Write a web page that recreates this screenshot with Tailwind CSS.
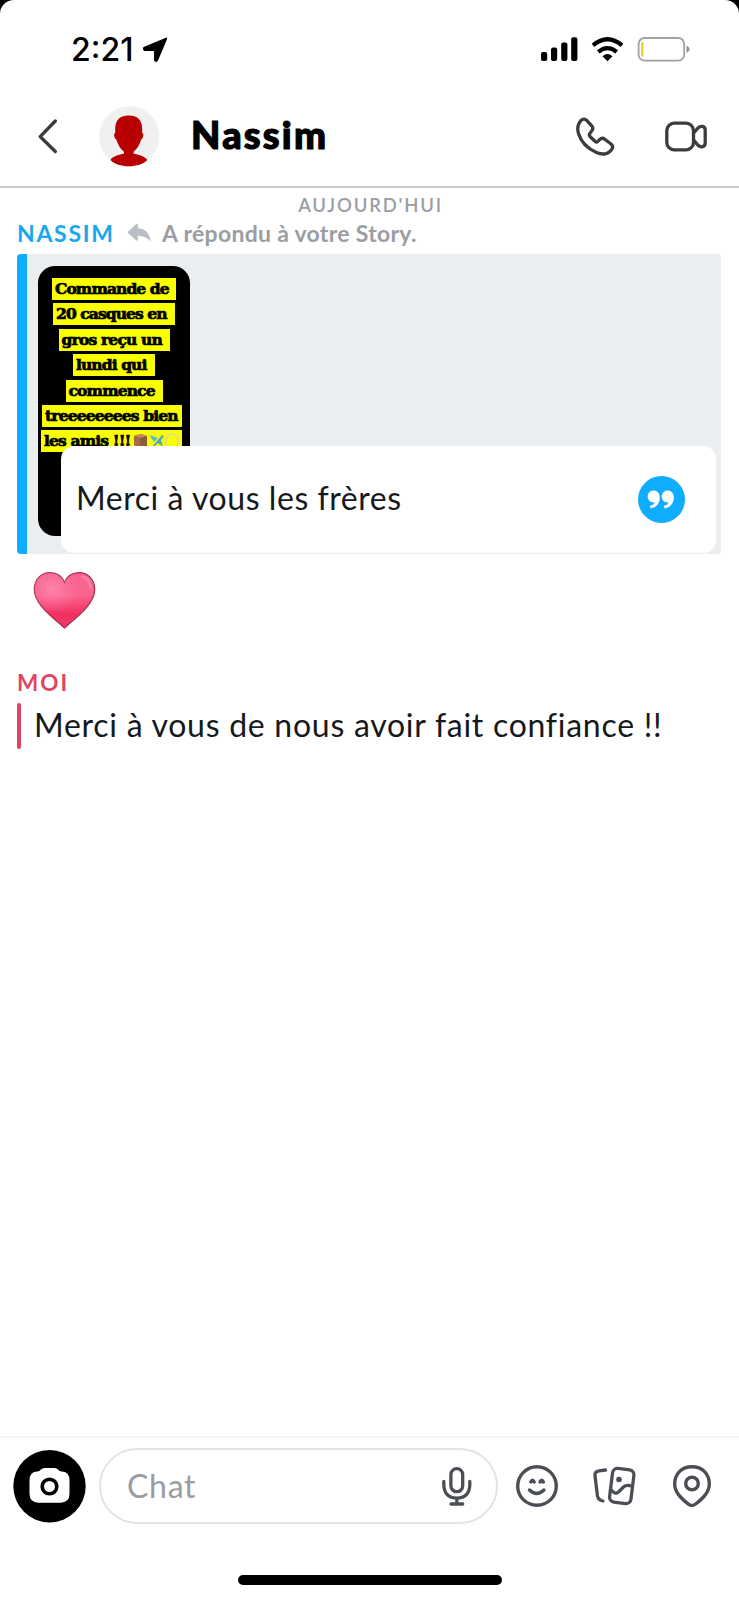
<!DOCTYPE html>
<html lang="fr">
<head>
<meta charset="utf-8">
<title>Chat</title>
<script src="https://cdn.jsdelivr.net/npm/@tailwindcss/browser@4"></script>
</head>
<body class="bg-black">
<div class="w-[739px] h-[1600px] bg-white rounded-t-[14px] overflow-hidden flex flex-col font-['Lato','Noto_Sans',sans-serif]">

  <!-- Status bar -->
  <div class="h-[98px] shrink-0 flex items-start pt-[37px] pl-[71px] pr-[48px]">
    <span class="font-['Inter',sans-serif] font-medium text-[32px] leading-[25px] w-[72px] tracking-[0px] text-black">2:21</span>
    <svg class="w-[25px] h-[25px]" viewBox="0 0 25 25"><path d="M23.2 1.600 14.200 22.800Q13 25 12 22.800V13H1.900Q-.4 12 1.600 10.700Z" fill="#000" stroke="#000" stroke-width="2" stroke-linejoin="round"/></svg>
    <svg class="ml-auto w-[38px] h-[25px]" viewBox="0 0 38 25"><rect x="1" y="15" width="6.200" height="9" rx="2"/><rect x="11" y="10.500" width="6.200" height="13.500" rx="2"/><rect x="21.200" y="5.500" width="6.200" height="18.500" rx="2"/><rect x="31.200" y="0.300" width="6.200" height="23.700" rx="2"/></svg>
    <svg class="ml-[13px] w-[33px] h-[25px]" viewBox="0 0 33 25" fill="none" stroke="#000" stroke-width="4.200"><path d="M2 8.300Q16.500 -3.900 31 8.300"/><path d="M7.300 14.800Q16.500 7.300 25.700 14.800"/><path d="M11.500 19.200Q16.500 14.800 21.500 19.200L16.500 24.200Z" fill="#000" stroke="none"/></svg>
    <svg class="ml-[13px] w-[54px] h-[25px]" viewBox="0 0 54 25"><rect x="1.600" y="1" width="45.600" height="22.700" rx="6" fill="none" stroke="#a2a2a2" stroke-width="1.800"/><rect x="4" y="5" width="2.600" height="14.500" rx="1" fill="#f2d32c"/><path d="M49.500 8.500Q52.500 10 52.500 12.300T49.500 16Z" fill="#8f8f8f"/></svg>
  </div>

  <!-- Conversation header -->
  <header class="h-[90px] shrink-0 border-b-2 border-[#c9c9c9] flex items-start">
    <svg class="ml-[36px] mt-[19px] w-[24px] h-[38px]" viewBox="0 0 24 38" fill="none" stroke="#3c3c3e" stroke-width="3.400" stroke-linecap="round" stroke-linejoin="round"><path d="M19.300 4 4.200 19.600 19.300 34.500"/></svg>
    <svg class="ml-[39px] mt-[8px] w-[61px] h-[61px]" viewBox="0 0 61 61"><circle cx="30.300" cy="30.500" r="30.200" fill="#f0f0f0"/><path d="M16.300 27C15.200 14 20.500 9.500 29.700 9.500S44.200 14 43.100 27C45.300 27 44.200 33 42.300 33.200 40.500 39 38 43 34.500 45.700V47.500C39 48.500 46 50 48.200 54 41 62.300 18.500 62.300 11.500 54 13.500 50 20.500 48.500 25 47.500V45.700C21.500 43 19 39 17.200 33.200 15.200 33 14.200 27 16.300 27Z" fill="#b90000"/></svg>
    <h1 class="ml-[31px] mt-[13px] font-black text-[38px] leading-[46px] text-black tracking-[2.200px] [-webkit-text-stroke:1.2px_#000]">Nassim</h1>
    <svg class="ml-auto mt-[18px] w-[42px] h-[42px]" viewBox="0 0 42 42" fill="none" stroke="#3c3c3e" stroke-width="3.300" stroke-linejoin="round" stroke-linecap="round"><path d="M6.300 4.200C8 2.500 10.200 2.900 11.700 4.400L16.700 9.800C18.200 11.600 18 13.400 16.700 14.900L14.800 17.500C14 18.500 14.200 19.500 15 20.500L20 25.300C21 26.200 21.900 26.200 22.800 25.400L24.900 23.300C26.300 22 28.100 21.800 29.800 23.200L36 28C38 29.800 38.200 31.700 36.500 33.700C33 38.200 27.500 39 21.500 36.500C12.500 32.500 6 26 3.500 17.500C2 12.500 3.100 7.500 6.300 4.200Z"/></svg>
    <svg class="ml-[47px] mr-[30px] mt-[21px] w-[45px] h-[36px]" viewBox="0 0 45 36" fill="none" stroke="#3c3c3e" stroke-width="3.300" stroke-linejoin="round"><rect x="2.800" y="4.200" width="26.700" height="26.700" rx="7.500"/><path d="M29.700 14 34 9C37 6 41.200 7.200 41.200 11V24C41.200 28 37 29 34 26.300L29.700 21"/></svg>
  </header>

  <!-- Messages -->
  <main class="flex-1 pl-[17px] pr-[18px]">
    <div class="mt-[7px] h-[20px] text-center text-[18.500px] leading-[20px] font-semibold tracking-[1.800px] text-[#9a9ea3] pl-[3px]">AUJOURD'HUI</div>
    <div class="mt-[4px] h-[35px] flex items-start">
      <span class="w-[110px] pt-[1px] text-[23px] leading-[26px] font-bold tracking-[1.700px] text-[#18a8f0]">NASSIM</span>
      <svg class="mt-[4px] w-[25px] h-[20px]" viewBox="0 0 25 20"><path d="M10.800 1.500V5.200C18.500 5.600 23 10.500 23.500 18.500 20.500 14.700 16.500 12.800 10.800 12.700V17Q10.500 18.500 9 17.300L1.200 10.300Q.4 9.300 1.200 8.500L9 1.200Q10.500 0 10.800 1.500Z" fill="#b9bec5"/></svg>
      <span class="ml-[10px] pt-[1px] text-[23px] leading-[26px] font-bold tracking-[0.300px] text-[#9a9ea3] whitespace-nowrap">A répondu à votre Story.</span>
    </div>

    <!-- Story reply -->
    <section class="relative h-[300px] rounded-[4px] overflow-hidden border-l-[10px] border-[#0fadff] bg-[#ebeef1]">
      <div class="ml-[11px] mt-[12px] w-[152px] h-[270px] rounded-[17px] bg-black overflow-hidden pt-[12px] flex flex-col items-center gap-[3.400px] font-['DejaVu_Serif',serif] font-bold text-[15.500px] leading-[21px] text-black whitespace-nowrap [-webkit-text-stroke:0.7px_#000]">
        <div class="w-[124px] pl-[3px] h-[22px] bg-[#faff00] tracking-[-0.900px]">Commande de</div>
        <div class="w-[122px] pl-[3px] h-[22px] bg-[#faff00] tracking-[-0.900px]">20 casques en</div>
        <div class="w-[111px] pl-[3px] h-[22px] bg-[#faff00] tracking-[-0.800px]">gros reçu un</div>
        <div class="w-[82px] pl-[3px] h-[22px] bg-[#faff00] tracking-[-0.900px]">lundi qui</div>
        <div class="w-[97px] pl-[3px] h-[22px] bg-[#faff00] tracking-[-0.850px]">commence</div>
        <div class="w-[140px] mr-[4px] pl-[3px] h-[22px] bg-[#faff00] tracking-[-0.850px]">treeeeeeees bien</div>
        <div class="w-[141px] mr-[5px] pl-[3px] h-[22px] bg-[#faff00] tracking-[-0.850px] flex">
          <span class="w-[90px]">les amis !!!</span>
          <svg class="mt-[3px] w-[46px] h-[16px]" viewBox="0 0 46 16"><path d="M0 3 7 1 13 3V13L6 15 0 12Z" fill="#8d5a3c"/><path d="M0 3 6 5 13 3 7 1Z" fill="#c08a60"/><path d="M6 5V15L0 12V3Z" fill="#a36c49"/><path d="M18 14 28 2 30 3 27 7 29 14 24 10 20 14Z" fill="#4aa7c9"/><path d="M15 2 24 5 20 9Z" fill="#5bbad6"/><path d="M32 12V7A6 6 0 0 1 44 7V12" fill="none" stroke="#e3df7a" stroke-width="2"/></svg>
        </div>
      </div>
      <div class="absolute left-[34px] top-[192px] w-[655px] h-[107px] rounded-[13px] bg-white flex items-center pl-[15px] pr-[31px]">
        <p class="-mt-[3px] text-[32px] leading-[40px] text-[#16191c] whitespace-nowrap tracking-[0.550px]">Merci à vous les frères</p>
        <svg class="ml-auto w-[47px] h-[47px]" viewBox="0 0 47 47"><circle cx="23.500" cy="23.500" r="23.500" fill="#0fadff"/><g fill="#fff"><path d="M15.700 14.500C19.500 14.500 21.800 17.500 21.800 21.500 21.800 27.500 18 32 12.500 32.300L11.800 29.800C14.500 29.400 16 28.200 16.600 26.500 12.500 27 9.700 24.200 9.700 20.600 9.700 17 12.300 14.500 15.700 14.500Z"/><path d="M29.700 14.500C33.500 14.500 35.800 17.500 35.800 21.500 35.800 27.500 32 32 26.500 32.300L25.800 29.800C28.500 29.400 30 28.200 30.600 26.500 26.500 27 23.700 24.200 23.700 20.600 23.700 17 26.300 14.500 29.700 14.500Z"/></g></svg>
      </div>
    </section>

    <svg class="ml-[16px] mt-[17px] w-[64px] h-[60px]" viewBox="0 0 64 60">
      <defs>
        <linearGradient id="h" x1="0" y1="0" x2="0" y2="1"><stop offset="0" stop-color="#f5648d"/><stop offset=".4" stop-color="#fb6490"/><stop offset=".75" stop-color="#f0305f"/><stop offset="1" stop-color="#ee3b69"/></linearGradient>
        <radialGradient id="g" cx=".3" cy=".3" r=".45"><stop offset="0" stop-color="#ff93b5" stop-opacity=".7"/><stop offset="1" stop-color="#ff7ba5" stop-opacity="0"/></radialGradient>
      </defs>
      <path d="M31.500 57C22 48 1.300 34 1.300 18.500 1.300 8 8.500 1.600 16.800 1.600 24 1.600 29.500 5.500 31.500 11.800 33.500 5.500 39 1.600 46.200 1.600 54.500 1.600 61.700 8 61.700 18.500 61.700 34 41 48 31.500 57Z" fill="url(#h)" stroke="#a82a50" stroke-width="1.200"/>
      <path d="M31.500 57C22 48 1.300 34 1.300 18.500 1.300 8 8.500 1.600 16.800 1.600 24 1.600 29.500 5.500 31.500 11.800 33.500 5.500 39 1.600 46.200 1.600 54.500 1.600 61.700 8 61.700 18.500 61.700 34 41 48 31.500 57Z" fill="url(#g)"/>
      <path d="M49 5.500Q57 7.500 57.500 16.500" fill="none" stroke="#ff9fba" stroke-width="2.500" stroke-linecap="round" opacity=".5"/>
    </svg>

    <div class="mt-[38px] text-[22.500px] leading-[28px] font-bold tracking-[2px] text-[#de4562]">MOI</div>
    <div class="mt-[6px] h-[46px] flex items-center">
      <div class="w-[4px] h-[46px] rounded-[2px] bg-[#de4562]"></div>
      <p class="ml-[13px] -mt-[2px] text-[32px] leading-[40px] text-[#16191c] whitespace-nowrap tracking-[0.730px]">Merci à vous de nous avoir fait confiance !!</p>
    </div>
  </main>

  <!-- Composer -->
  <footer class="h-[164px] shrink-0 border-t-2 border-[#f6f6f6] flex flex-col">
    <div class="mt-[10px] h-[76px] flex items-center pl-[13px] pr-[26px]">
      <svg class="w-[73px] h-[73px]" viewBox="0 0 73 73"><circle cx="36.500" cy="36.200" r="36.200"/><path d="M16.500 30.500Q16.500 21.500 24.500 21.500 26.500 21.500 28 19.500 29.300 18 31.500 18H41.500Q43.700 18 45 19.500 46.500 21.500 48.500 21.500 56.500 21.500 56.500 30.500V43.500Q56.500 52.700 47.500 52.700H25.500Q16.500 52.700 16.500 43.500Z" fill="#fff"/><circle cx="36.500" cy="36.500" r="7.300" fill="none" stroke="#000" stroke-width="3.600"/></svg>
      <div class="ml-[13px] w-[399px] h-[76px] rounded-full border-2 border-[#e3e3e3] flex items-center pl-[26px] pr-[23px]">
        <span class="text-[32px] leading-[40px] text-[#999da1] tracking-[0.700px] -mt-[1px]">Chat</span>
        <svg class="ml-auto w-[32px] h-[40px]" viewBox="0 0 32 40" fill="none" stroke="#4b4f55" stroke-width="3.300" stroke-linecap="round"><rect x="9.900" y="2.700" width="11.800" height="23" rx="5.900"/><path d="M2.800 15.500V19Q3.300 31.800 15.800 32.200 28.300 31.800 28.800 19V15.500M15.800 32.200V37M10 38H21.700"/></svg>
      </div>
      <svg class="ml-[17px] w-[43px] h-[43px]" viewBox="0 0 43 43" fill="none" stroke="#4b4f55" stroke-width="3.400" stroke-linecap="round"><circle cx="22" cy="21" r="19.300"/><path d="M14.500 25Q21.700 32 28.900 25"/><path d="M15.800 17Q17.500 13.300 19.200 17M25 17Q26.700 13.300 28.400 17" stroke-width="3.400"/></svg>
      <svg class="ml-[35px] w-[43px] h-[41px]" viewBox="0 0 43 41" fill="none" stroke="#4b4f55" stroke-width="3.300" stroke-linecap="round" stroke-linejoin="round"><path d="M12.500 4 6 4.800Q1.500 5.500 2 9.800L4.500 30Q5.200 34 10 35"/><rect x="18" y="3" width="21.500" height="34" rx="5" transform="rotate(7 28.700 20)"/><path d="M17.500 23.500 21 26.500Q23.500 28.300 26 25.500L30.500 21Q33.500 18.200 38.500 20"/><circle cx="26" cy="13.500" r="2.800" fill="#4b4f55" stroke="none"/></svg>
      <svg class="ml-auto w-[42px] h-[44px]" viewBox="0 0 42 44" fill="none" stroke="#4b4f55" stroke-width="3.400" stroke-linejoin="round"><path d="M21 2.700C31.500 2.700 38.300 10 38.300 20 38.300 28.500 31.500 34.500 25 39.800Q21 43 17 39.800C10.500 34.500 3.700 28.500 3.700 20 3.700 10 10.500 2.700 21 2.700Z"/><circle cx="21" cy="19.500" r="6.300"/></svg>
    </div>
    <div class="mt-[51px] self-center w-[264px] h-[10px] rounded-full bg-black"></div>
  </footer>
</div>
</body>
</html>
